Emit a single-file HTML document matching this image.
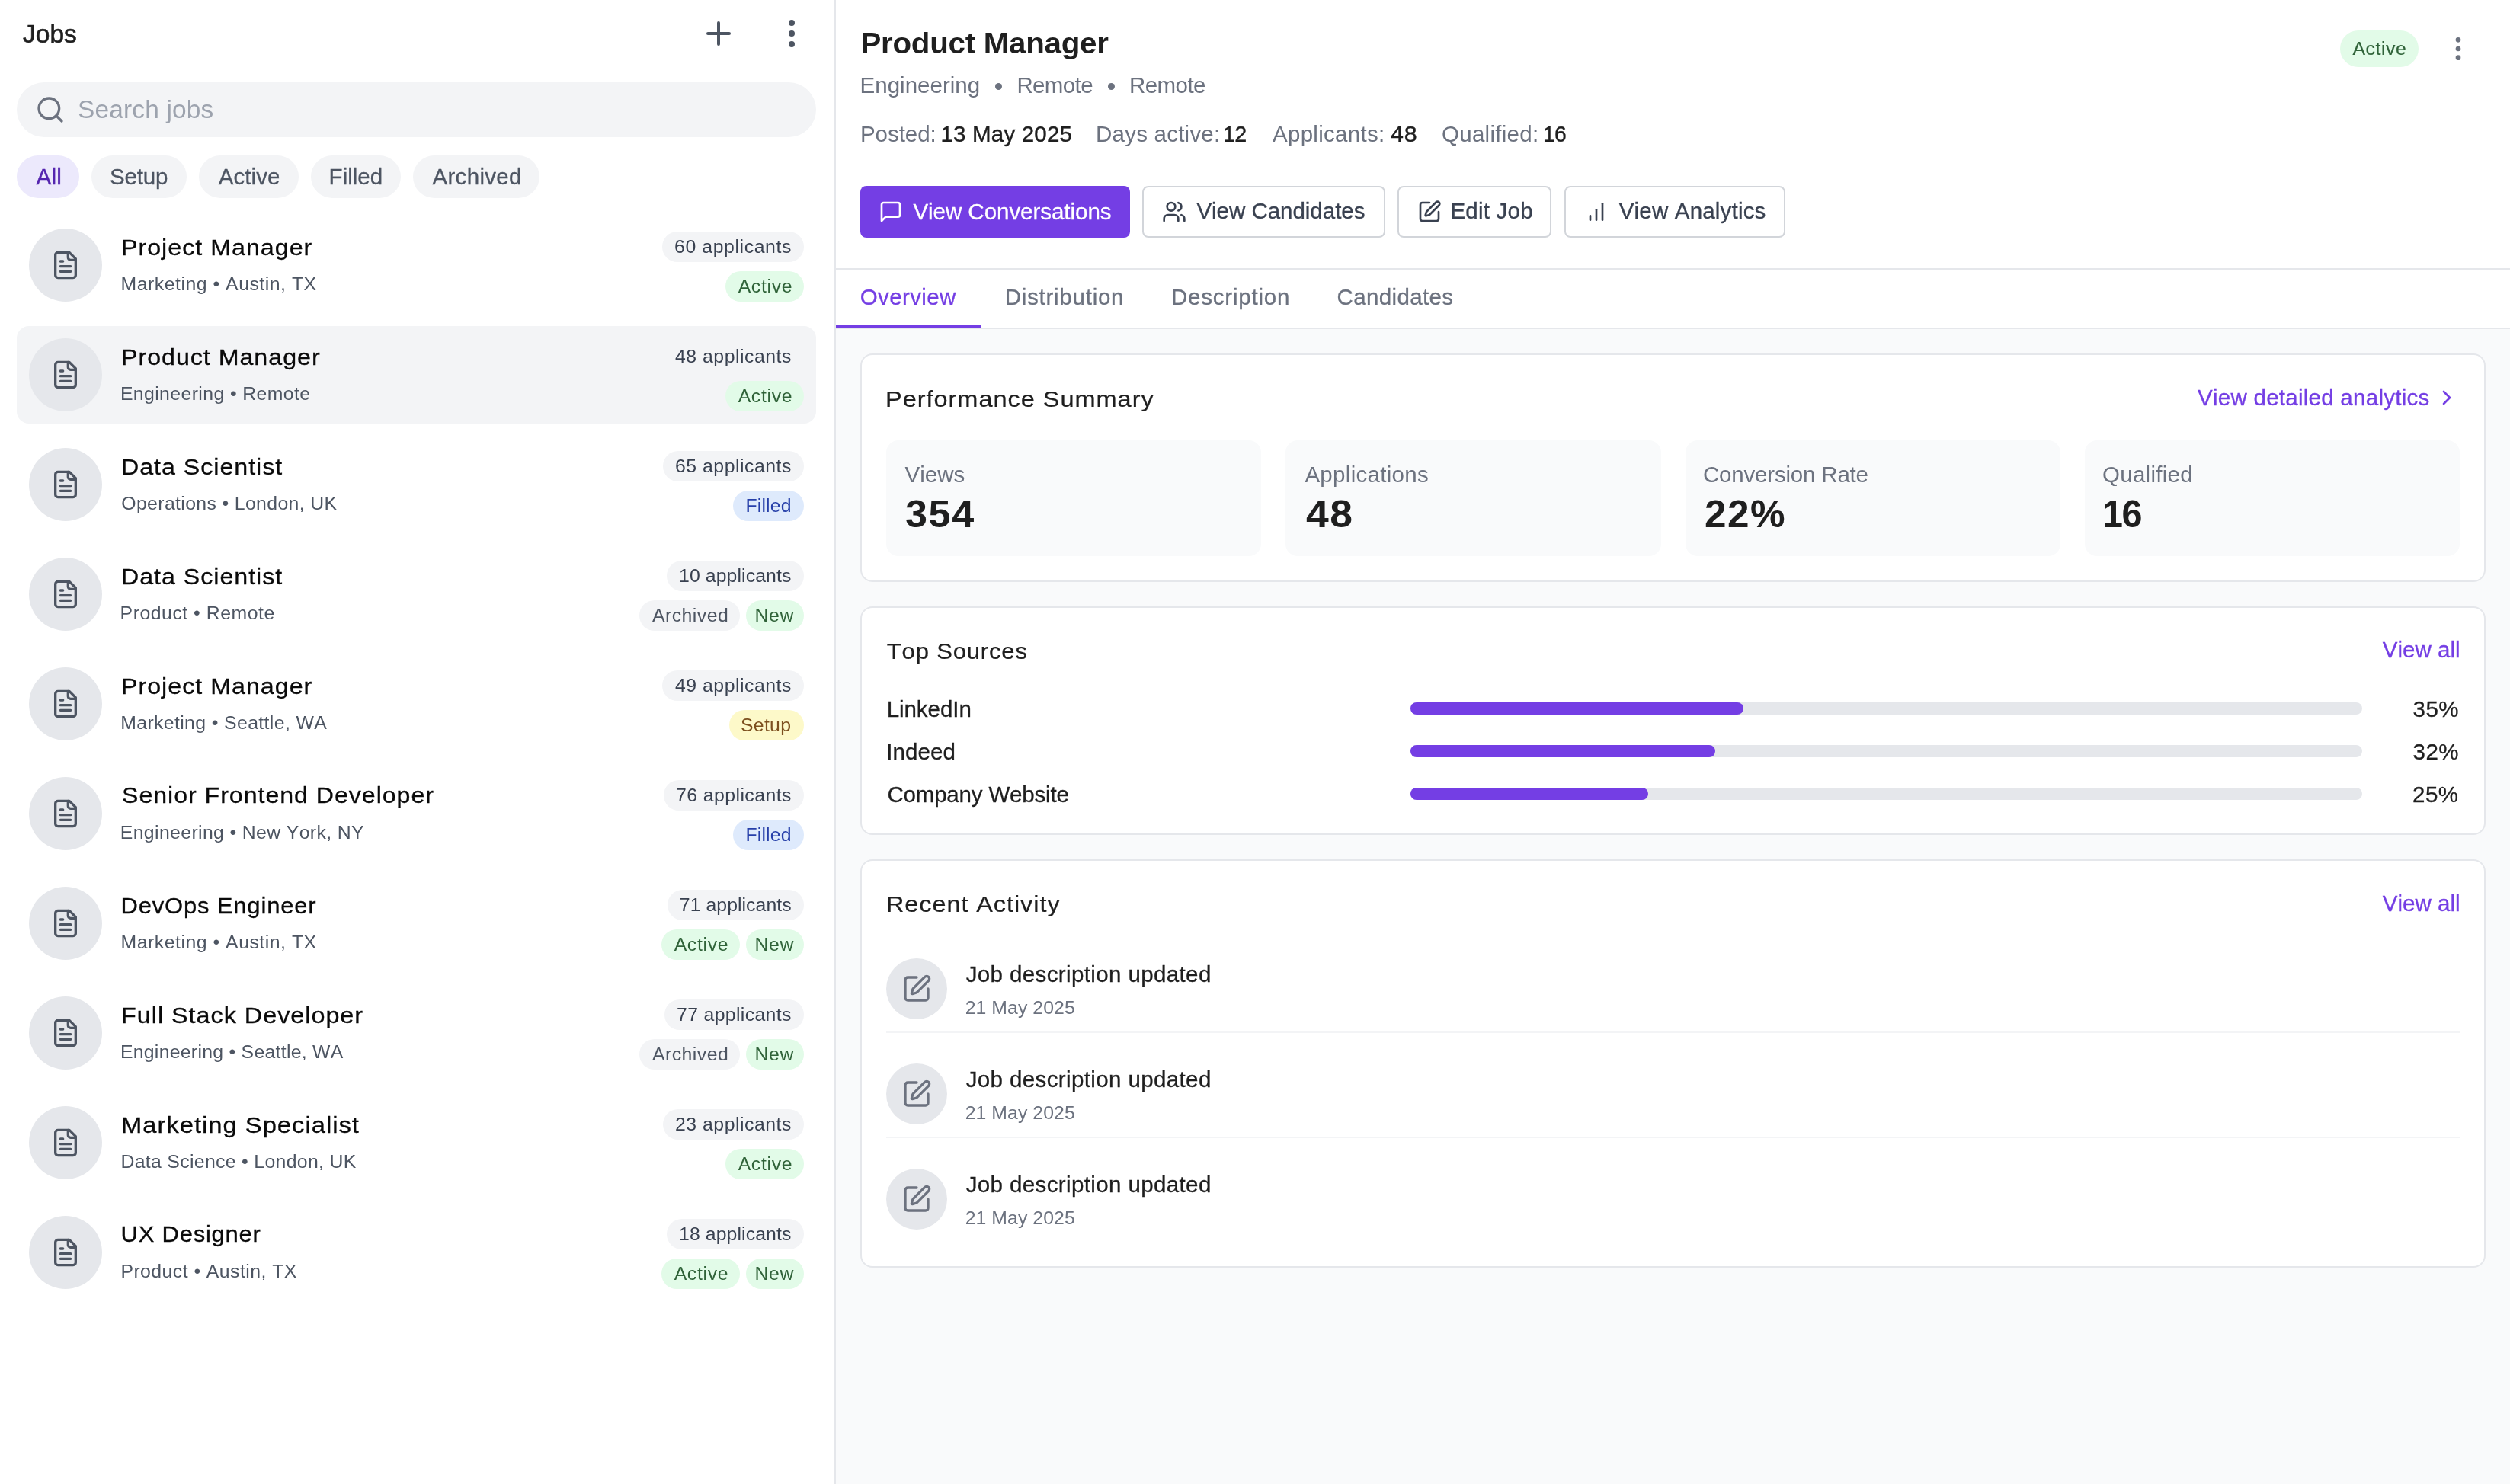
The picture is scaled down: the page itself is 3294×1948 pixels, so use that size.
<!DOCTYPE html>
<html><head><meta charset="utf-8"><title>Jobs</title>
<style>
html,body{margin:0;padding:0;}
@media (max-width:1700px) and (min-resolution:1.5dppx){html{zoom:.5;}}
body{width:3294px;height:1948px;position:relative;background:#fff;font-family:"Liberation Sans",sans-serif;}
.b{position:absolute;box-sizing:content-box;}
.t{position:absolute;white-space:nowrap;line-height:1;transform-origin:0 50%;font-kerning:none;}
#tx{position:absolute;left:0;top:0;width:3294px;height:1948px;will-change:transform;}
</style></head><body>
<div class="b" style="left:0px;top:0px;width:1095px;height:1948px;background:#fff;"></div>
<div class="b" style="left:1095px;top:0px;width:2px;height:1948px;background:#e5e7eb;"></div>
<svg class="b" style="left:919px;top:20px;color:#4d5562" width="48" height="48" viewBox="0 0 24 24" fill="none" stroke="#4d5562" stroke-width="2" stroke-linecap="round" stroke-linejoin="round"><path d="M5 12h14"/><path d="M12 5v14"/></svg>
<svg class="b" style="left:1015px;top:20px;color:#4d5562" width="48" height="48" viewBox="0 0 24 24" fill="none" stroke="#4d5562" stroke-width="2" stroke-linecap="round" stroke-linejoin="round"><g stroke="none" fill="currentColor"><circle cx="12" cy="12" r="2"/><circle cx="12" cy="5" r="2"/><circle cx="12" cy="19" r="2"/></g></svg>
<div class="b" style="left:22px;top:108px;width:1049px;height:72px;background:#f3f4f6;border-radius:36px;"></div>
<svg class="b" style="left:46px;top:124px;color:#6c727f" width="40" height="40" viewBox="0 0 24 24" fill="none" stroke="#6c727f" stroke-width="2" stroke-linecap="round" stroke-linejoin="round"><circle cx="11" cy="11" r="8"/><path d="m21 21-4.3-4.3"/></svg>
<div class="b" style="left:22px;top:204px;width:82px;height:56px;background:#ece9fc;border-radius:28px;"></div>
<div class="b" style="left:120px;top:204px;width:125px;height:56px;background:#f3f4f6;border-radius:28px;"></div>
<div class="b" style="left:261px;top:204px;width:131px;height:56px;background:#f3f4f6;border-radius:28px;"></div>
<div class="b" style="left:408px;top:204px;width:118px;height:56px;background:#f3f4f6;border-radius:28px;"></div>
<div class="b" style="left:542px;top:204px;width:166px;height:56px;background:#f3f4f6;border-radius:28px;"></div>
<div class="b" style="left:38px;top:300px;width:96px;height:96px;background:#e5e7eb;border-radius:48px;"></div>
<svg class="b" style="left:66px;top:328px;color:#4d5562" width="40" height="40" viewBox="0 0 24 24" fill="none" stroke="#4d5562" stroke-width="2" stroke-linecap="round" stroke-linejoin="round"><path d="M15 2H6a2 2 0 0 0-2 2v16a2 2 0 0 0 2 2h12a2 2 0 0 0 2-2V7Z"/><path d="M14 2v4a2 2 0 0 0 2 2h4"/><path d="M10 9H8"/><path d="M16 13H8"/><path d="M16 17H8"/></svg>
<div class="b" style="left:869px;top:304px;width:186px;height:40px;background:#f3f4f6;border-radius:20px;"></div>
<div class="b" style="left:952px;top:356px;width:103px;height:40px;background:#e2fbe8;border-radius:20px;"></div>
<div class="b" style="left:22px;top:428px;width:1049px;height:128px;background:#f3f4f6;border-radius:16px;"></div>
<div class="b" style="left:38px;top:444px;width:96px;height:96px;background:#e5e7eb;border-radius:48px;"></div>
<svg class="b" style="left:66px;top:472px;color:#4d5562" width="40" height="40" viewBox="0 0 24 24" fill="none" stroke="#4d5562" stroke-width="2" stroke-linecap="round" stroke-linejoin="round"><path d="M15 2H6a2 2 0 0 0-2 2v16a2 2 0 0 0 2 2h12a2 2 0 0 0 2-2V7Z"/><path d="M14 2v4a2 2 0 0 0 2 2h4"/><path d="M10 9H8"/><path d="M16 13H8"/><path d="M16 17H8"/></svg>
<div class="b" style="left:952px;top:500px;width:103px;height:40px;background:#e2fbe8;border-radius:20px;"></div>
<div class="b" style="left:38px;top:588px;width:96px;height:96px;background:#e5e7eb;border-radius:48px;"></div>
<svg class="b" style="left:66px;top:616px;color:#4d5562" width="40" height="40" viewBox="0 0 24 24" fill="none" stroke="#4d5562" stroke-width="2" stroke-linecap="round" stroke-linejoin="round"><path d="M15 2H6a2 2 0 0 0-2 2v16a2 2 0 0 0 2 2h12a2 2 0 0 0 2-2V7Z"/><path d="M14 2v4a2 2 0 0 0 2 2h4"/><path d="M10 9H8"/><path d="M16 13H8"/><path d="M16 17H8"/></svg>
<div class="b" style="left:870px;top:592px;width:185px;height:40px;background:#f3f4f6;border-radius:20px;"></div>
<div class="b" style="left:962px;top:644px;width:93px;height:40px;background:#deeafc;border-radius:20px;"></div>
<div class="b" style="left:38px;top:732px;width:96px;height:96px;background:#e5e7eb;border-radius:48px;"></div>
<svg class="b" style="left:66px;top:760px;color:#4d5562" width="40" height="40" viewBox="0 0 24 24" fill="none" stroke="#4d5562" stroke-width="2" stroke-linecap="round" stroke-linejoin="round"><path d="M15 2H6a2 2 0 0 0-2 2v16a2 2 0 0 0 2 2h12a2 2 0 0 0 2-2V7Z"/><path d="M14 2v4a2 2 0 0 0 2 2h4"/><path d="M10 9H8"/><path d="M16 13H8"/><path d="M16 17H8"/></svg>
<div class="b" style="left:875px;top:736px;width:180px;height:40px;background:#f3f4f6;border-radius:20px;"></div>
<div class="b" style="left:979px;top:788px;width:76px;height:40px;background:#e2fbe8;border-radius:20px;"></div>
<div class="b" style="left:839.3px;top:788px;width:131.7px;height:40px;background:#f3f4f6;border-radius:20px;"></div>
<div class="b" style="left:38px;top:876px;width:96px;height:96px;background:#e5e7eb;border-radius:48px;"></div>
<svg class="b" style="left:66px;top:904px;color:#4d5562" width="40" height="40" viewBox="0 0 24 24" fill="none" stroke="#4d5562" stroke-width="2" stroke-linecap="round" stroke-linejoin="round"><path d="M15 2H6a2 2 0 0 0-2 2v16a2 2 0 0 0 2 2h12a2 2 0 0 0 2-2V7Z"/><path d="M14 2v4a2 2 0 0 0 2 2h4"/><path d="M10 9H8"/><path d="M16 13H8"/><path d="M16 17H8"/></svg>
<div class="b" style="left:869px;top:880px;width:186px;height:40px;background:#f3f4f6;border-radius:20px;"></div>
<div class="b" style="left:956.7px;top:932px;width:98.3px;height:40px;background:#fdf9c9;border-radius:20px;"></div>
<div class="b" style="left:38px;top:1020px;width:96px;height:96px;background:#e5e7eb;border-radius:48px;"></div>
<svg class="b" style="left:66px;top:1048px;color:#4d5562" width="40" height="40" viewBox="0 0 24 24" fill="none" stroke="#4d5562" stroke-width="2" stroke-linecap="round" stroke-linejoin="round"><path d="M15 2H6a2 2 0 0 0-2 2v16a2 2 0 0 0 2 2h12a2 2 0 0 0 2-2V7Z"/><path d="M14 2v4a2 2 0 0 0 2 2h4"/><path d="M10 9H8"/><path d="M16 13H8"/><path d="M16 17H8"/></svg>
<div class="b" style="left:871px;top:1024px;width:184px;height:40px;background:#f3f4f6;border-radius:20px;"></div>
<div class="b" style="left:962px;top:1076px;width:93px;height:40px;background:#deeafc;border-radius:20px;"></div>
<div class="b" style="left:38px;top:1164px;width:96px;height:96px;background:#e5e7eb;border-radius:48px;"></div>
<svg class="b" style="left:66px;top:1192px;color:#4d5562" width="40" height="40" viewBox="0 0 24 24" fill="none" stroke="#4d5562" stroke-width="2" stroke-linecap="round" stroke-linejoin="round"><path d="M15 2H6a2 2 0 0 0-2 2v16a2 2 0 0 0 2 2h12a2 2 0 0 0 2-2V7Z"/><path d="M14 2v4a2 2 0 0 0 2 2h4"/><path d="M10 9H8"/><path d="M16 13H8"/><path d="M16 17H8"/></svg>
<div class="b" style="left:875.6px;top:1168px;width:179.4px;height:40px;background:#f3f4f6;border-radius:20px;"></div>
<div class="b" style="left:979px;top:1220px;width:76px;height:40px;background:#e2fbe8;border-radius:20px;"></div>
<div class="b" style="left:868px;top:1220px;width:103px;height:40px;background:#e2fbe8;border-radius:20px;"></div>
<div class="b" style="left:38px;top:1308px;width:96px;height:96px;background:#e5e7eb;border-radius:48px;"></div>
<svg class="b" style="left:66px;top:1336px;color:#4d5562" width="40" height="40" viewBox="0 0 24 24" fill="none" stroke="#4d5562" stroke-width="2" stroke-linecap="round" stroke-linejoin="round"><path d="M15 2H6a2 2 0 0 0-2 2v16a2 2 0 0 0 2 2h12a2 2 0 0 0 2-2V7Z"/><path d="M14 2v4a2 2 0 0 0 2 2h4"/><path d="M10 9H8"/><path d="M16 13H8"/><path d="M16 17H8"/></svg>
<div class="b" style="left:872px;top:1312px;width:183px;height:40px;background:#f3f4f6;border-radius:20px;"></div>
<div class="b" style="left:979px;top:1364px;width:76px;height:40px;background:#e2fbe8;border-radius:20px;"></div>
<div class="b" style="left:839.3px;top:1364px;width:131.7px;height:40px;background:#f3f4f6;border-radius:20px;"></div>
<div class="b" style="left:38px;top:1452px;width:96px;height:96px;background:#e5e7eb;border-radius:48px;"></div>
<svg class="b" style="left:66px;top:1480px;color:#4d5562" width="40" height="40" viewBox="0 0 24 24" fill="none" stroke="#4d5562" stroke-width="2" stroke-linecap="round" stroke-linejoin="round"><path d="M15 2H6a2 2 0 0 0-2 2v16a2 2 0 0 0 2 2h12a2 2 0 0 0 2-2V7Z"/><path d="M14 2v4a2 2 0 0 0 2 2h4"/><path d="M10 9H8"/><path d="M16 13H8"/><path d="M16 17H8"/></svg>
<div class="b" style="left:870px;top:1456px;width:185px;height:40px;background:#f3f4f6;border-radius:20px;"></div>
<div class="b" style="left:952px;top:1508px;width:103px;height:40px;background:#e2fbe8;border-radius:20px;"></div>
<div class="b" style="left:38px;top:1596px;width:96px;height:96px;background:#e5e7eb;border-radius:48px;"></div>
<svg class="b" style="left:66px;top:1624px;color:#4d5562" width="40" height="40" viewBox="0 0 24 24" fill="none" stroke="#4d5562" stroke-width="2" stroke-linecap="round" stroke-linejoin="round"><path d="M15 2H6a2 2 0 0 0-2 2v16a2 2 0 0 0 2 2h12a2 2 0 0 0 2-2V7Z"/><path d="M14 2v4a2 2 0 0 0 2 2h4"/><path d="M10 9H8"/><path d="M16 13H8"/><path d="M16 17H8"/></svg>
<div class="b" style="left:875px;top:1600px;width:180px;height:40px;background:#f3f4f6;border-radius:20px;"></div>
<div class="b" style="left:979px;top:1652px;width:76px;height:40px;background:#e2fbe8;border-radius:20px;"></div>
<div class="b" style="left:868px;top:1652px;width:103px;height:40px;background:#e2fbe8;border-radius:20px;"></div>
<div class="b" style="left:1097px;top:0px;width:2197px;height:352px;background:#fff;"></div>
<div class="b" style="left:1097px;top:352px;width:2197px;height:2px;background:#e5e7eb;"></div>
<div class="b" style="left:1097px;top:354px;width:2197px;height:76px;background:#fff;"></div>
<div class="b" style="left:1097px;top:430px;width:2197px;height:2px;background:#e5e7eb;"></div>
<div class="b" style="left:1097px;top:426px;width:191px;height:4px;background:#743ee4;"></div>
<div class="b" style="left:1097px;top:432px;width:2197px;height:1516px;background:#f9fafb;"></div>
<div class="b" style="left:1306.1000000000001px;top:109.3px;width:8.6px;height:8.6px;background:#6c727f;border-radius:5px;"></div>
<div class="b" style="left:1454.1000000000001px;top:109.3px;width:8.6px;height:8.6px;background:#6c727f;border-radius:5px;"></div>
<div class="b" style="left:1129px;top:244px;width:354px;height:68px;background:#743ee4;border-radius:8px;"></div>
<svg class="b" style="left:1153px;top:262px;color:#fff" width="32" height="32" viewBox="0 0 24 24" fill="none" stroke="#fff" stroke-width="2" stroke-linecap="round" stroke-linejoin="round"><path d="M21 15a2 2 0 0 1-2 2H7l-4 4V5a2 2 0 0 1 2-2h14a2 2 0 0 1 2 2z"/></svg>
<div class="b" style="left:1499px;top:244px;width:315px;height:64px;background:#fff;border-radius:8px;border:2px solid #d2d5da;"></div>
<svg class="b" style="left:1525px;top:262px;color:#394150" width="32" height="32" viewBox="0 0 24 24" fill="none" stroke="#394150" stroke-width="2" stroke-linecap="round" stroke-linejoin="round"><path d="M16 21v-2a4 4 0 0 0-4-4H6a4 4 0 0 0-4 4v2"/><circle cx="9" cy="7" r="4"/><path d="M22 21v-2a4 4 0 0 0-3-3.87"/><path d="M16 3.13a4 4 0 0 1 0 7.75"/></svg>
<div class="b" style="left:1834px;top:244px;width:198px;height:64px;background:#fff;border-radius:8px;border:2px solid #d2d5da;"></div>
<svg class="b" style="left:1860px;top:262px;color:#394150" width="32" height="32" viewBox="0 0 24 24" fill="none" stroke="#394150" stroke-width="2" stroke-linecap="round" stroke-linejoin="round"><path d="M12 3H5a2 2 0 0 0-2 2v14a2 2 0 0 0 2 2h14a2 2 0 0 0 2-2v-7"/><path d="M18.375 2.625a1 1 0 0 1 3 3l-9.013 9.014a2 2 0 0 1-.853.505l-2.873.84a.5.5 0 0 1-.62-.62l.84-2.873a2 2 0 0 1 .506-.852z"/></svg>
<div class="b" style="left:2053px;top:244px;width:286px;height:64px;background:#fff;border-radius:8px;border:2px solid #d2d5da;"></div>
<svg class="b" style="left:2079px;top:262px;color:#394150" width="32" height="32" viewBox="0 0 24 24" fill="none" stroke="#394150" stroke-width="2" stroke-linecap="round" stroke-linejoin="round"><path d="M12 20V10"/><path d="M18 20V4"/><path d="M6 20v-4"/></svg>
<div class="b" style="left:3071px;top:40px;width:103px;height:48px;background:#e2fbe8;border-radius:24px;"></div>
<svg class="b" style="left:3206px;top:44px;color:#6c727f" width="40" height="40" viewBox="0 0 24 24" fill="none" stroke="#6c727f" stroke-width="2" stroke-linecap="round" stroke-linejoin="round"><g stroke="none" fill="currentColor"><circle cx="12" cy="12" r="2"/><circle cx="12" cy="5" r="2"/><circle cx="12" cy="19" r="2"/></g></svg>
<div class="b" style="left:1129px;top:464px;width:2129px;height:296px;background:#fff;border-radius:16px;border:2px solid #e5e7eb;"></div>
<svg class="b" style="left:3195px;top:506px;color:#743ee4" width="32" height="32" viewBox="0 0 24 24" fill="none" stroke="#743ee4" stroke-width="2" stroke-linecap="round" stroke-linejoin="round"><path d="m9 18 6-6-6-6"/></svg>
<div class="b" style="left:1163px;top:578px;width:492.25px;height:152px;background:#f9fafb;border-radius:16px;"></div>
<div class="b" style="left:1687.25px;top:578px;width:492.25px;height:152px;background:#f9fafb;border-radius:16px;"></div>
<div class="b" style="left:2211.5px;top:578px;width:492.25px;height:152px;background:#f9fafb;border-radius:16px;"></div>
<div class="b" style="left:2735.75px;top:578px;width:492.25px;height:152px;background:#f9fafb;border-radius:16px;"></div>
<div class="b" style="left:1129px;top:796px;width:2129px;height:296px;background:#fff;border-radius:16px;border:2px solid #e5e7eb;"></div>
<div class="b" style="left:1851px;top:922px;width:1249px;height:16px;background:#e5e7eb;border-radius:8px;"></div>
<div class="b" style="left:1851px;top:922px;width:437px;height:16px;background:#743ee4;border-radius:8px;"></div>
<div class="b" style="left:1851px;top:978px;width:1249px;height:16px;background:#e5e7eb;border-radius:8px;"></div>
<div class="b" style="left:1851px;top:978px;width:400px;height:16px;background:#743ee4;border-radius:8px;"></div>
<div class="b" style="left:1851px;top:1034px;width:1249px;height:16px;background:#e5e7eb;border-radius:8px;"></div>
<div class="b" style="left:1851px;top:1034px;width:312px;height:16px;background:#743ee4;border-radius:8px;"></div>
<div class="b" style="left:1129px;top:1128px;width:2129px;height:532px;background:#fff;border-radius:16px;border:2px solid #e5e7eb;"></div>
<div class="b" style="left:1163px;top:1258px;width:80px;height:80px;background:#e5e7eb;border-radius:40px;"></div>
<svg class="b" style="left:1183px;top:1278px;color:#6c727f" width="40" height="40" viewBox="0 0 24 24" fill="none" stroke="#6c727f" stroke-width="2" stroke-linecap="round" stroke-linejoin="round"><path d="M12 3H5a2 2 0 0 0-2 2v14a2 2 0 0 0 2 2h14a2 2 0 0 0 2-2v-7"/><path d="M18.375 2.625a1 1 0 0 1 3 3l-9.013 9.014a2 2 0 0 1-.853.505l-2.873.84a.5.5 0 0 1-.62-.62l.84-2.873a2 2 0 0 1 .506-.852z"/></svg>
<div class="b" style="left:1163px;top:1354px;width:2065px;height:2px;background:#f3f4f6;"></div>
<div class="b" style="left:1163px;top:1396px;width:80px;height:80px;background:#e5e7eb;border-radius:40px;"></div>
<svg class="b" style="left:1183px;top:1416px;color:#6c727f" width="40" height="40" viewBox="0 0 24 24" fill="none" stroke="#6c727f" stroke-width="2" stroke-linecap="round" stroke-linejoin="round"><path d="M12 3H5a2 2 0 0 0-2 2v14a2 2 0 0 0 2 2h14a2 2 0 0 0 2-2v-7"/><path d="M18.375 2.625a1 1 0 0 1 3 3l-9.013 9.014a2 2 0 0 1-.853.505l-2.873.84a.5.5 0 0 1-.62-.62l.84-2.873a2 2 0 0 1 .506-.852z"/></svg>
<div class="b" style="left:1163px;top:1492px;width:2065px;height:2px;background:#f3f4f6;"></div>
<div class="b" style="left:1163px;top:1534px;width:80px;height:80px;background:#e5e7eb;border-radius:40px;"></div>
<svg class="b" style="left:1183px;top:1554px;color:#6c727f" width="40" height="40" viewBox="0 0 24 24" fill="none" stroke="#6c727f" stroke-width="2" stroke-linecap="round" stroke-linejoin="round"><path d="M12 3H5a2 2 0 0 0-2 2v14a2 2 0 0 0 2 2h14a2 2 0 0 0 2-2v-7"/><path d="M18.375 2.625a1 1 0 0 1 3 3l-9.013 9.014a2 2 0 0 1-.853.505l-2.873.84a.5.5 0 0 1-.62-.62l.84-2.873a2 2 0 0 1 .506-.852z"/></svg>
<div id="tx">
<div class="t" style="left:30.00px;top:27.75px;font-size:33.5px;color:#1f1f1f;-webkit-text-stroke:0.6px #1f1f1f;">Jobs</div>
<div class="t" style="left:102.00px;top:127.23px;font-size:33.4px;color:#9da3ae;letter-spacing:0.187px;">Search jobs</div>
<div class="t" style="left:47.60px;top:216.81px;font-size:29.5px;color:#5425af;letter-spacing:0.185px;-webkit-text-stroke:0.5px #5425af;">All</div>
<div class="t" style="left:144.00px;top:216.90px;font-size:29.5px;color:#4d5562;letter-spacing:-0.171px;-webkit-text-stroke:0.3px #4d5562;">Setup</div>
<div class="t" style="left:286.70px;top:216.78px;font-size:29.5px;color:#4d5562;letter-spacing:0.075px;-webkit-text-stroke:0.3px #4d5562;">Active</div>
<div class="t" style="left:431.60px;top:216.78px;font-size:29.5px;color:#4d5562;letter-spacing:0.022px;-webkit-text-stroke:0.3px #4d5562;">Filled</div>
<div class="t" style="left:567.50px;top:216.78px;font-size:29.5px;color:#4d5562;letter-spacing:0.305px;-webkit-text-stroke:0.3px #4d5562;">Archived</div>
<div class="t" style="left:159.22px;top:308.75px;font-size:31px;color:#0a0a0a;letter-spacing:0.930px;-webkit-text-stroke:0.3px #0a0a0a;transform:scale(1.0410,0.97);">Project Manager</div>
<div class="t" style="left:158.50px;top:360.51px;font-size:24.8px;color:#4d5562;letter-spacing:0.520px;">Marketing • Austin, TX</div>
<div class="t" style="left:885.00px;top:311.51px;font-size:24.8px;color:#394150;letter-spacing:0.606px;">60 applicants</div>
<div class="t" style="left:968.65px;top:364.01px;font-size:24.8px;color:#306339;letter-spacing:0.693px;">Active</div>
<div class="t" style="left:159.12px;top:452.75px;font-size:31px;color:#0a0a0a;letter-spacing:0.930px;-webkit-text-stroke:0.3px #0a0a0a;transform:scale(1.0391,0.97);">Product Manager</div>
<div class="t" style="left:157.90px;top:504.51px;font-size:24.8px;color:#4d5562;letter-spacing:0.398px;">Engineering • Remote</div>
<div class="t" style="left:886.00px;top:455.51px;font-size:24.8px;color:#394150;letter-spacing:0.522px;">48 applicants</div>
<div class="t" style="left:968.65px;top:508.01px;font-size:24.8px;color:#306339;letter-spacing:0.693px;">Active</div>
<div class="t" style="left:159.02px;top:596.75px;font-size:31px;color:#0a0a0a;letter-spacing:0.930px;-webkit-text-stroke:0.3px #0a0a0a;transform:scale(1.0385,0.97);">Data Scientist</div>
<div class="t" style="left:159.30px;top:648.51px;font-size:24.8px;color:#4d5562;letter-spacing:0.364px;">Operations • London, UK</div>
<div class="t" style="left:886.00px;top:599.51px;font-size:24.8px;color:#394150;letter-spacing:0.522px;">65 applicants</div>
<div class="t" style="left:978.45px;top:652.01px;font-size:24.8px;color:#263fa9;letter-spacing:0.167px;">Filled</div>
<div class="t" style="left:159.02px;top:740.75px;font-size:31px;color:#0a0a0a;letter-spacing:0.930px;-webkit-text-stroke:0.3px #0a0a0a;transform:scale(1.0385,0.97);">Data Scientist</div>
<div class="t" style="left:157.60px;top:792.51px;font-size:24.8px;color:#4d5562;letter-spacing:0.523px;">Product • Remote</div>
<div class="t" style="left:891.00px;top:743.51px;font-size:24.8px;color:#394150;letter-spacing:0.106px;">10 applicants</div>
<div class="t" style="left:990.60px;top:796.01px;font-size:24.8px;color:#306339;letter-spacing:0.551px;">New</div>
<div class="t" style="left:856.05px;top:796.01px;font-size:24.8px;color:#4d5562;letter-spacing:0.459px;">Archived</div>
<div class="t" style="left:159.22px;top:884.75px;font-size:31px;color:#0a0a0a;letter-spacing:0.930px;-webkit-text-stroke:0.3px #0a0a0a;transform:scale(1.0410,0.97);">Project Manager</div>
<div class="t" style="left:158.20px;top:936.51px;font-size:24.8px;color:#4d5562;letter-spacing:0.377px;">Marketing • Seattle, WA</div>
<div class="t" style="left:886.00px;top:887.51px;font-size:24.8px;color:#394150;letter-spacing:0.522px;">49 applicants</div>
<div class="t" style="left:972.05px;top:940.01px;font-size:24.8px;color:#7d501f;letter-spacing:0.272px;">Setup</div>
<div class="t" style="left:159.86px;top:1027.93px;font-size:31px;color:#0a0a0a;letter-spacing:0.930px;-webkit-text-stroke:0.3px #0a0a0a;transform:scale(1.0366,0.97);">Senior Frontend Developer</div>
<div class="t" style="left:157.80px;top:1080.51px;font-size:24.8px;color:#4d5562;letter-spacing:0.369px;">Engineering • New York, NY</div>
<div class="t" style="left:887.00px;top:1031.51px;font-size:24.8px;color:#394150;letter-spacing:0.439px;">76 applicants</div>
<div class="t" style="left:978.45px;top:1084.01px;font-size:24.8px;color:#263fa9;letter-spacing:0.167px;">Filled</div>
<div class="t" style="left:158.50px;top:1172.75px;font-size:31px;color:#0a0a0a;letter-spacing:0.817px;-webkit-text-stroke:0.3px #0a0a0a;transform:scale(1.0000,0.97);">DevOps Engineer</div>
<div class="t" style="left:158.50px;top:1224.51px;font-size:24.8px;color:#4d5562;letter-spacing:0.520px;">Marketing • Austin, TX</div>
<div class="t" style="left:891.80px;top:1175.51px;font-size:24.8px;color:#394150;letter-spacing:0.056px;">71 applicants</div>
<div class="t" style="left:990.60px;top:1228.01px;font-size:24.8px;color:#306339;letter-spacing:0.551px;">New</div>
<div class="t" style="left:884.65px;top:1228.01px;font-size:24.8px;color:#306339;letter-spacing:0.693px;">Active</div>
<div class="t" style="left:158.61px;top:1316.75px;font-size:31px;color:#0a0a0a;letter-spacing:0.930px;-webkit-text-stroke:0.3px #0a0a0a;transform:scale(1.0443,0.97);">Full Stack Developer</div>
<div class="t" style="left:157.90px;top:1368.51px;font-size:24.8px;color:#4d5562;letter-spacing:0.279px;">Engineering • Seattle, WA</div>
<div class="t" style="left:888.00px;top:1319.51px;font-size:24.8px;color:#394150;letter-spacing:0.356px;">77 applicants</div>
<div class="t" style="left:990.60px;top:1372.01px;font-size:24.8px;color:#306339;letter-spacing:0.551px;">New</div>
<div class="t" style="left:856.05px;top:1372.01px;font-size:24.8px;color:#4d5562;letter-spacing:0.459px;">Archived</div>
<div class="t" style="left:159.09px;top:1460.75px;font-size:31px;color:#0a0a0a;letter-spacing:0.930px;-webkit-text-stroke:0.3px #0a0a0a;transform:scale(1.0571,0.97);">Marketing Specialist</div>
<div class="t" style="left:158.40px;top:1512.51px;font-size:24.8px;color:#4d5562;letter-spacing:0.334px;">Data Science • London, UK</div>
<div class="t" style="left:886.00px;top:1463.51px;font-size:24.8px;color:#394150;letter-spacing:0.522px;">23 applicants</div>
<div class="t" style="left:968.65px;top:1516.01px;font-size:24.8px;color:#306339;letter-spacing:0.693px;">Active</div>
<div class="t" style="left:158.60px;top:1603.88px;font-size:31px;color:#0a0a0a;letter-spacing:0.759px;-webkit-text-stroke:0.3px #0a0a0a;transform:scale(1.0000,0.97);">UX Designer</div>
<div class="t" style="left:158.40px;top:1656.51px;font-size:24.8px;color:#4d5562;letter-spacing:0.455px;">Product • Austin, TX</div>
<div class="t" style="left:891.00px;top:1607.51px;font-size:24.8px;color:#394150;letter-spacing:0.106px;">18 applicants</div>
<div class="t" style="left:990.60px;top:1660.01px;font-size:24.8px;color:#306339;letter-spacing:0.551px;">New</div>
<div class="t" style="left:884.65px;top:1660.01px;font-size:24.8px;color:#306339;letter-spacing:0.693px;">Active</div>
<div class="t" style="left:1129.50px;top:37.39px;font-size:40.3px;color:#1f1f1f;letter-spacing:-0.269px;font-weight:700;transform:scale(1.0000,0.975);">Product Manager</div>
<div class="t" style="left:1128.60px;top:96.53px;font-size:29.5px;color:#6c727f;letter-spacing:0.005px;">Engineering</div>
<div class="t" style="left:1334.40px;top:96.53px;font-size:29.5px;color:#6c727f;letter-spacing:-0.617px;">Remote</div>
<div class="t" style="left:1482.00px;top:96.53px;font-size:29.5px;color:#6c727f;letter-spacing:-0.577px;">Remote</div>
<div class="t" style="left:1129.00px;top:161.03px;font-size:29.5px;color:#6c727f;letter-spacing:-0.057px;">Posted:</div>
<div class="t" style="left:1234.50px;top:161.01px;font-size:29.5px;color:#1f1f1f;letter-spacing:0.185px;-webkit-text-stroke:0.4px #1f1f1f;">13 May 2025</div>
<div class="t" style="left:1438.00px;top:161.03px;font-size:29.5px;color:#6c727f;letter-spacing:0.230px;">Days active:</div>
<div class="t" style="left:1605.45px;top:161.01px;font-size:29.5px;color:#1f1f1f;letter-spacing:-0.885px;-webkit-text-stroke:0.4px #1f1f1f;transform:scale(0.9747,1);">12</div>
<div class="t" style="left:1670.00px;top:161.03px;font-size:29.5px;color:#6c727f;letter-spacing:0.289px;">Applicants:</div>
<div class="t" style="left:1824.90px;top:161.01px;font-size:29.5px;color:#1f1f1f;letter-spacing:0.885px;-webkit-text-stroke:0.4px #1f1f1f;transform:scale(1.0303,1);">48</div>
<div class="t" style="left:1892.00px;top:161.43px;font-size:29.5px;color:#6c727f;letter-spacing:0.286px;">Qualified:</div>
<div class="t" style="left:2024.78px;top:161.01px;font-size:29.5px;color:#1f1f1f;letter-spacing:-0.885px;-webkit-text-stroke:0.4px #1f1f1f;transform:scale(0.9586,1);">16</div>
<div class="t" style="left:1198.40px;top:262.79px;font-size:29.5px;color:#fff;letter-spacing:-0.033px;-webkit-text-stroke:0.3px #fff;">View Conversations</div>
<div class="t" style="left:1570.40px;top:261.98px;font-size:29.5px;color:#394150;letter-spacing:-0.024px;-webkit-text-stroke:0.3px #394150;">View Candidates</div>
<div class="t" style="left:1903.40px;top:261.98px;font-size:29.5px;color:#394150;letter-spacing:0.231px;-webkit-text-stroke:0.3px #394150;">Edit Job</div>
<div class="t" style="left:2124.70px;top:261.98px;font-size:29.5px;color:#394150;letter-spacing:0.190px;-webkit-text-stroke:0.3px #394150;">View Analytics</div>
<div class="t" style="left:3087.40px;top:51.51px;font-size:24.8px;color:#306339;letter-spacing:0.553px;-webkit-text-stroke:0.2px #306339;">Active</div>
<div class="t" style="left:1128.80px;top:375.09px;font-size:29.5px;color:#743ee4;letter-spacing:0.380px;-webkit-text-stroke:0.3px #743ee4;">Overview</div>
<div class="t" style="left:1318.70px;top:374.97px;font-size:29.5px;color:#6c727f;letter-spacing:0.750px;-webkit-text-stroke:0.3px #6c727f;">Distribution</div>
<div class="t" style="left:1537.00px;top:374.97px;font-size:29.5px;color:#6c727f;letter-spacing:0.785px;-webkit-text-stroke:0.3px #6c727f;">Description</div>
<div class="t" style="left:1754.60px;top:375.07px;font-size:29.5px;color:#6c727f;letter-spacing:0.356px;-webkit-text-stroke:0.3px #6c727f;">Candidates</div>
<div class="t" style="left:1162.00px;top:507.50px;font-size:31px;color:#1f1f1f;letter-spacing:0.930px;-webkit-text-stroke:0.25px #1f1f1f;transform:scale(1.0484,0.97);">Performance Summary</div>
<div class="t" style="left:2884.00px;top:507.48px;font-size:29.5px;color:#743ee4;letter-spacing:0.264px;-webkit-text-stroke:0.3px #743ee4;">View detailed analytics</div>
<div class="t" style="left:1187.50px;top:608.03px;font-size:29.5px;color:#6c727f;letter-spacing:0.040px;">Views</div>
<div class="t" style="left:1187.97px;top:649.75px;font-size:50.5px;color:#1f1f1f;letter-spacing:1.515px;font-weight:700;transform:scale(1.0325,1);">354</div>
<div class="t" style="left:1712.40px;top:608.03px;font-size:29.5px;color:#6c727f;letter-spacing:0.303px;">Applications</div>
<div class="t" style="left:1713.60px;top:649.75px;font-size:50.5px;color:#1f1f1f;letter-spacing:1.515px;font-weight:700;transform:scale(1.0592,1);">48</div>
<div class="t" style="left:2235.00px;top:608.03px;font-size:29.5px;color:#6c727f;letter-spacing:-0.194px;">Conversion Rate</div>
<div class="t" style="left:2236.88px;top:649.75px;font-size:50.5px;color:#1f1f1f;letter-spacing:1.515px;font-weight:700;transform:scale(1.0156,1);">22%</div>
<div class="t" style="left:2759.10px;top:608.03px;font-size:29.5px;color:#6c727f;letter-spacing:0.253px;">Qualified</div>
<div class="t" style="left:2759.02px;top:649.75px;font-size:50.5px;color:#1f1f1f;letter-spacing:-1.515px;font-weight:700;transform:scale(0.9600,1);">16</div>
<div class="t" style="left:1163.80px;top:839.00px;font-size:31px;color:#1f1f1f;letter-spacing:0.835px;-webkit-text-stroke:0.25px #1f1f1f;transform:scale(1.0000,0.97);">Top Sources</div>
<div class="t" style="left:3126.80px;top:838.48px;font-size:29.5px;color:#743ee4;letter-spacing:0.029px;-webkit-text-stroke:0.3px #743ee4;">View all</div>
<div class="t" style="left:1163.70px;top:916.01px;font-size:29.5px;color:#1f1f1f;letter-spacing:-0.061px;-webkit-text-stroke:0.3px #1f1f1f;">LinkedIn</div>
<div class="t" style="left:3166.60px;top:915.64px;font-size:29.5px;color:#1f1f1f;letter-spacing:0.444px;-webkit-text-stroke:0.3px #1f1f1f;">35%</div>
<div class="t" style="left:1163.20px;top:972.01px;font-size:29.5px;color:#1f1f1f;letter-spacing:0.076px;-webkit-text-stroke:0.3px #1f1f1f;">Indeed</div>
<div class="t" style="left:3166.60px;top:971.64px;font-size:29.5px;color:#1f1f1f;letter-spacing:0.444px;-webkit-text-stroke:0.3px #1f1f1f;">32%</div>
<div class="t" style="left:1164.40px;top:1028.14px;font-size:29.5px;color:#1f1f1f;letter-spacing:-0.179px;-webkit-text-stroke:0.3px #1f1f1f;">Company Website</div>
<div class="t" style="left:3166.10px;top:1027.51px;font-size:29.5px;color:#1f1f1f;letter-spacing:0.444px;-webkit-text-stroke:0.3px #1f1f1f;">25%</div>
<div class="t" style="left:1162.91px;top:1170.50px;font-size:31px;color:#1f1f1f;letter-spacing:0.930px;-webkit-text-stroke:0.25px #1f1f1f;transform:scale(1.0437,0.97);">Recent Activity</div>
<div class="t" style="left:3126.80px;top:1170.98px;font-size:29.5px;color:#743ee4;letter-spacing:0.029px;-webkit-text-stroke:0.3px #743ee4;">View all</div>
<div class="t" style="left:1267.70px;top:1264.21px;font-size:29.5px;color:#1f1f1f;letter-spacing:0.380px;-webkit-text-stroke:0.3px #1f1f1f;">Job description updated</div>
<div class="t" style="left:1266.70px;top:1311.01px;font-size:24.8px;color:#6c727f;letter-spacing:0.062px;">21 May 2025</div>
<div class="t" style="left:1267.70px;top:1402.21px;font-size:29.5px;color:#1f1f1f;letter-spacing:0.380px;-webkit-text-stroke:0.3px #1f1f1f;">Job description updated</div>
<div class="t" style="left:1266.70px;top:1449.01px;font-size:24.8px;color:#6c727f;letter-spacing:0.062px;">21 May 2025</div>
<div class="t" style="left:1267.70px;top:1540.21px;font-size:29.5px;color:#1f1f1f;letter-spacing:0.380px;-webkit-text-stroke:0.3px #1f1f1f;">Job description updated</div>
<div class="t" style="left:1266.70px;top:1587.01px;font-size:24.8px;color:#6c727f;letter-spacing:0.062px;">21 May 2025</div>
</div>
</body></html>
